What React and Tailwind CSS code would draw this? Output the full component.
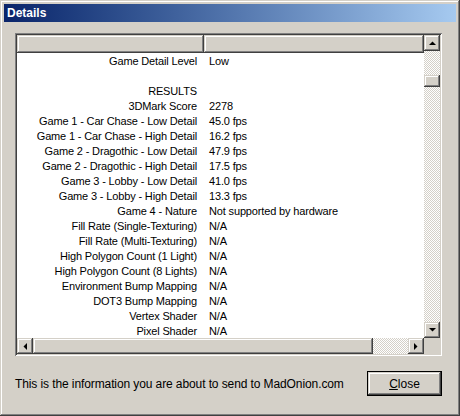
import React from 'react';

const rows = [
    ['Game Detail Level', 'Low'],
    ['', ''],
    ['RESULTS', ''],
    ['3DMark Score', '2278'],
    ['Game 1 - Car Chase - Low Detail', '45.0 fps'],
    ['Game 1 - Car Chase - High Detail', '16.2 fps'],
    ['Game 2 - Dragothic - Low Detail', '47.9 fps'],
    ['Game 2 - Dragothic - High Detail', '17.5 fps'],
    ['Game 3 - Lobby - Low Detail', '41.0 fps'],
    ['Game 3 - Lobby - High Detail', '13.3 fps'],
    ['Game 4 - Nature', 'Not supported by hardware'],
    ['Fill Rate (Single-Texturing)', 'N/A'],
    ['Fill Rate (Multi-Texturing)', 'N/A'],
    ['High Polygon Count (1 Light)', 'N/A'],
    ['High Polygon Count (8 Lights)', 'N/A'],
    ['Environment Bump Mapping', 'N/A'],
    ['DOT3 Bump Mapping', 'N/A'],
    ['Vertex Shader', 'N/A'],
    ['Pixel Shader', 'N/A'],
];

const raised = 'bg-[#d4d0c8] shadow-[inset_-1px_-1px_#404040,inset_1px_1px_#d4d0c8,inset_-2px_-2px_#808080,inset_2px_2px_#fff]';
const checker = 'bg-[repeating-conic-gradient(#d4d0c8_0%_25%,#fff_0%_50%)] bg-[length:2px_2px]';

// little black triangles for the scroll buttons
const Arrow = ({ dir }) => {
    const pts = {
        up: '0,4 7,4 3.5,0.5',
        down: '0,0 7,0 3.5,3.5',
        left: '4,0 4,7 0.5,3.5',
        right: '0,0 0,7 3.5,3.5',
    }[dir];
    const horiz = dir === 'left' || dir === 'right';
    return (
        <svg width={horiz ? 4 : 7} height={horiz ? 7 : 4} viewBox={horiz ? '0 0 4 7' : '0 0 7 4'}>
            <polygon points={pts} fill="#000" />
        </svg>
    );
};

const ScrollButton = ({ dir }) => (
    <div className={`w-[16px] h-[16px] flex items-center justify-center ${raised}`}>
        <Arrow dir={dir} />
    </div>
);

const App = () => {
    return (
        <div
            className="w-[460px] h-[416px] bg-[#d4d0c8] p-[4px] flex flex-col shadow-[inset_-1px_-1px_#404040,inset_1px_1px_#d4d0c8,inset_-2px_-2px_#808080,inset_2px_2px_#fff] text-black"
            style={{ fontFamily: '"Liberation Sans", Arial, sans-serif' }}
        >
            {/* Title bar */}
            <div className="h-[18px] flex items-center px-[3px] bg-gradient-to-r from-[#0a246a] to-[#a6caf0]">
                <span className="text-white font-bold text-[12px] leading-none">Details</span>
            </div>

            {/* List view */}
            <div className="ml-[11px] mt-[11px] w-[427px] h-[323px] p-[2px] bg-white shadow-[inset_1px_1px_#808080,inset_-1px_-1px_#fff,inset_2px_2px_#404040,inset_-2px_-2px_#d4d0c8]">
                <div className="grid grid-cols-[407px_16px] grid-rows-[303px_16px] w-[423px] h-[319px]">
                    <div className="overflow-hidden flex flex-col text-[11px] tracking-[-0.15px]">
                        <div className="flex h-[18px] shrink-0 mb-[1px]">
                            <div className={`w-[187px] ${raised}`} />
                            <div className={`flex-1 ${raised}`} />
                        </div>
                        {rows.map(([label, value], i) => (
                            <div key={i} className="flex h-[15px] shrink-0 items-center leading-none whitespace-nowrap">
                                <div className="w-[187px] text-right pr-[7px]">{label}</div>
                                <div className="pl-[5px]">{value}</div>
                            </div>
                        ))}
                    </div>

                    {/* Vertical scrollbar */}
                    <div className="flex flex-col">
                        <ScrollButton dir="up" />
                        <div className={`flex-1 flex flex-col ${checker}`}>
                            <div className="h-[24px]" />
                            <div className={`h-[12px] w-[16px] ${raised}`} />
                        </div>
                        <ScrollButton dir="down" />
                    </div>

                    {/* Horizontal scrollbar */}
                    <div className="flex">
                        <ScrollButton dir="left" />
                        <div className={`flex-1 flex ${checker}`}>
                            <div className={`w-[340px] h-[16px] ${raised}`} />
                        </div>
                        <ScrollButton dir="right" />
                    </div>
                    <div className="bg-[#d4d0c8]" />
                </div>
            </div>

            {/* Footer */}
            <div className="flex items-center justify-between ml-[11px] mr-[14px] mt-[15px]">
                <span className="text-[12px] tracking-[-0.1px]">This is the information you are about to send to MadOnion.com</span>
                <div className="w-[75px] h-[25px] border border-black">
                    <div className={`w-full h-full flex items-center justify-center text-[12px] ${raised}`}>
                        <span><span className="underline">C</span>lose</span>
                    </div>
                </div>
            </div>
        </div>
    );
};

export default App;
